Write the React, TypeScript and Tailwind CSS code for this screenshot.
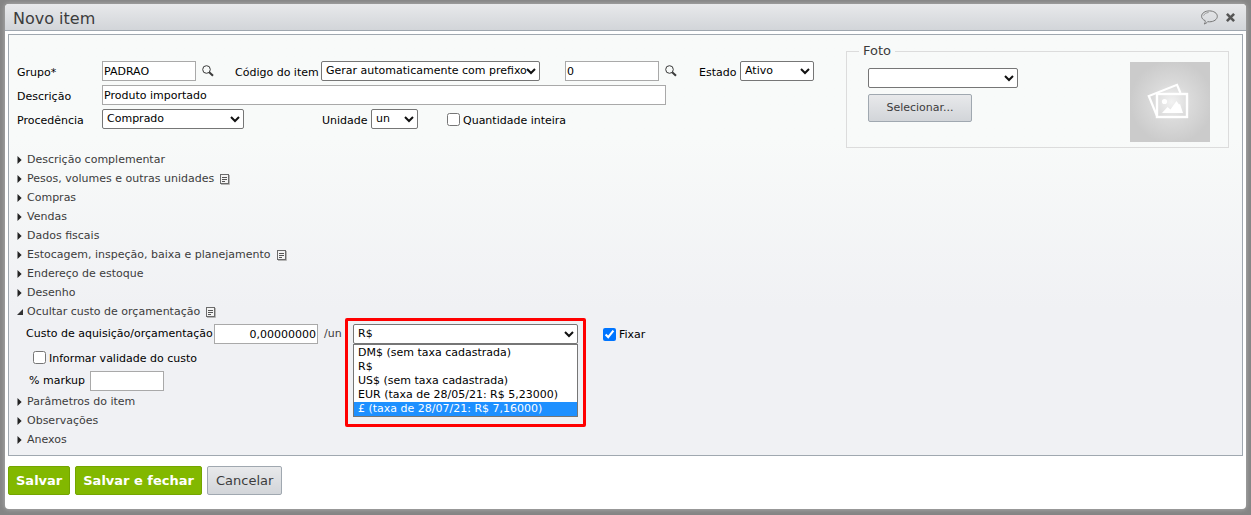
import React, { useState } from "react";
import type { ReactNode, SelectHTMLAttributes } from "react";

const inputClass =
  "h-5 rounded-none border border-[#a9a9a9] bg-white px-px text-[11px] leading-4 text-black focus:outline-none";
const checkboxClass = "m-0 size-[13px] shrink-0";
const grayButtonClass =
  "rounded-xs border border-[#a0a8b0] bg-linear-to-b from-[#e8e9eb] to-[#d2d5d9] text-[#3c3c3c]";
const greenButtonClass =
  "h-[29px] rounded-xs border border-[#74a500] bg-[#82b800] px-[7px] text-[13px] font-bold text-white";

const currencies = [
  "DM$ (sem taxa cadastrada)",
  "R$",
  "US$ (sem taxa cadastrada)",
  "EUR (taxa de 28/05/21: R$ 5,23000)",
  "£ (taxa de 28/07/21: R$ 7,16000)",
];

interface SelectProps extends SelectHTMLAttributes<HTMLSelectElement> {
  width: string; // classe de largura
  children: ReactNode;
}

function Select({ width, children, ...rest }: SelectProps) {
  return (
    <span className={`relative block shrink-0 ${width}`}>
      <select
        {...rest}
        className="block h-5 w-full appearance-none rounded-xs border border-[#767676] bg-white pl-1 text-[11px] leading-4 text-black focus:outline-none"
      >
        {children}
      </select>
      <svg
        width="10"
        height="7"
        viewBox="0 0 10 7"
        fill="none"
        stroke="#111"
        strokeWidth="2"
        className="pointer-events-none absolute top-[7px] right-1"
      >
        <path d="M1 1 L5 5 L9 1" />
      </svg>
    </span>
  );
}

function SearchButton({ label }: { label: string }) {
  return (
    <button type="button" aria-label={label} className="ml-1.5 shrink-0">
      <svg width="12" height="12" viewBox="0 0 12 12" fill="none" stroke="#3a3a3a">
        <circle cx="4.5" cy="4.5" r="3.8" />
        <path d="M7.2 7.2 L11 10.8" strokeWidth="2" />
      </svg>
    </button>
  );
}

function NoteIcon() {
  return (
    <svg width="10" height="11" viewBox="0 0 10 11" fill="none" className="mt-0.5 ml-1.5">
      <rect x="0.5" y="0.5" width="8" height="9" fill="#f4f4f4" stroke="#6b6b6b" />
      <path d="M2 3.5 H7 M2 5.5 H7 M2 7.5 H5" stroke="#555" />
      <path d="M9.5 1 V10.5 H1" stroke="#b5b5b5" />
    </svg>
  );
}

interface SectionProps {
  title: string;
  note?: boolean;
  open?: boolean;
}

function Section({ title, note, open }: SectionProps) {
  return (
    <button
      type="button"
      aria-expanded={!!open}
      className="flex h-[19px] items-center text-[11px] leading-4 text-[#3c3c3c]"
    >
      <span className="flex w-[10px] items-center">
        {open ? (
          <svg width="6" height="6" viewBox="0 0 6 6" fill="#333">
            <path d="M6 0 V6 H0 Z" />
          </svg>
        ) : (
          <svg width="5" height="8" viewBox="0 0 5 8" fill="#222">
            <path d="M0.5 0 L4.6 4 L0.5 8 Z" />
          </svg>
        )}
      </span>
      {title}
      {note && <NoteIcon />}
    </button>
  );
}

// pré-visualização vazia da foto
function PhotoPlaceholder() {
  return (
    <svg width="80" height="80" viewBox="0 0 80 80" role="img" aria-label="Sem foto" className="mt-[3px]">
      <defs>
        <radialGradient id="glow" cx="52%" cy="50%" r="52%">
          <stop offset="0" stopColor="#f2f2f2" />
          <stop offset="0.45" stopColor="#dadada" />
          <stop offset="1" stopColor="#cbcbcb" />
        </radialGradient>
      </defs>
      <rect width="80" height="80" fill="url(#glow)" />
      <path
        d="M50.5 31 L47 22.8 L18.8 34 L27 54"
        fill="none"
        stroke="#fff"
        strokeWidth="2.2"
      />
      <rect x="27" y="32" width="30" height="23" fill="none" stroke="#fff" strokeWidth="2.4" />
      <circle cx="34.5" cy="39.5" r="2.6" fill="#fff" />
      <path d="M32 51 L37.5 45 L40.5 47.5 L46.5 39 L49 42.5 L50 42 L53 51 Z" fill="#fff" />
    </svg>
  );
}

export default function App() {
  const [group, setGroup] = useState("PADRAO");
  const [prefix, setPrefix] = useState("0");
  const [description, setDescription] = useState("Produto importado");
  const [cost, setCost] = useState("0,00000000");
  const [markup, setMarkup] = useState("");
  const [currency, setCurrency] = useState("R$");

  return (
    <div className="min-h-screen bg-[#858585] px-[5px] pt-1 pb-1.5 font-['DejaVu_Sans',Verdana,sans-serif] text-[11px] leading-4 text-black">
      <div className="rounded-[4px] bg-white pb-[14px] shadow-[0_0_5px_#b4b4b4]">
        {/* barra de título */}
        <header className="flex h-[27px] items-center justify-between rounded-t-[4px] border-b border-[#a0a8b0] bg-linear-to-b from-[#e8e9eb] to-[#d2d5d9] pr-[11px] pl-2">
          <h1 className="pt-1 text-base text-[#3c3c3c]">Novo item</h1>
          <div className="flex items-center gap-2">
            <button type="button" aria-label="Comentários">
              <svg width="17" height="15" viewBox="0 0 17 15" fill="none" stroke="#777">
                <path d="M4.2 10.7 C1.9 9.7 0.6 8.2 0.6 6.3 C0.6 3.2 4 0.9 8.4 0.9 C12.8 0.9 16.3 3.2 16.3 6.3 C16.3 9.5 12.8 11.8 8.4 11.8 L6.6 11.7 C5.9 12.8 4.8 13.6 3.1 14 C4 13 4.4 12 4.2 10.7 Z" />
                <path d="M2.6 5.6 C3.3 3.9 5 2.8 7.6 2.5" stroke="#999" />
              </svg>
            </button>
            <button type="button" aria-label="Fechar">
              <svg width="9" height="9" viewBox="0 0 9 9" stroke="#555" strokeWidth="2.6">
                <path d="M0.9 0.9 L8.1 8.1 M8.1 0.9 L0.9 8.1" />
              </svg>
            </button>
          </div>
        </header>

        <main className="mx-[3px] mt-[3px] border border-[#a0a8b0] bg-linear-to-b from-[#f8faf9] from-25% to-[#f0f1f4] to-65% pr-[13px] pb-1.5 pl-2">
          <div className="flex justify-between pt-2">
            <div className="grid grid-cols-[85px_1fr] auto-rows-[20px] content-start items-center gap-y-1 pt-[18px]">
              <label htmlFor="group" className="pt-1">Grupo*</label>
              <div className="flex items-center">
                <input
                  id="group"
                  className={`${inputClass} w-[94px]`}
                  value={group}
                  onChange={(e) => setGroup(e.target.value)}
                />
                <SearchButton label="Pesquisar grupo" />
                <label htmlFor="code" className="ml-[21px] w-[86px] pt-1 whitespace-nowrap">Código do item</label>
                <Select id="code" width="w-[219px]">
                  <option>Gerar automaticamente com prefixo</option>
                </Select>
                <input
                  aria-label="Prefixo"
                  className={`${inputClass} ml-[25px] w-[94px]`}
                  value={prefix}
                  onChange={(e) => setPrefix(e.target.value)}
                />
                <SearchButton label="Pesquisar prefixo" />
                <label htmlFor="state" className="ml-[22px] w-[41px] pt-1">Estado</label>
                <Select id="state" width="w-[74px]">
                  <option>Ativo</option>
                </Select>
              </div>

              <label htmlFor="description" className="pt-1">Descrição</label>
              <input
                id="description"
                className={`${inputClass} w-[564px]`}
                value={description}
                onChange={(e) => setDescription(e.target.value)}
              />

              <label htmlFor="origin" className="pt-1">Procedência</label>
              <div className="flex items-center">
                <Select id="origin" width="w-[142px]">
                  <option>Comprado</option>
                </Select>
                <label htmlFor="unit" className="ml-[78px] w-[49px] pt-1">Unidade</label>
                <Select id="unit" width="w-[47px]">
                  <option>un</option>
                </Select>
                <label className="ml-[29px] flex items-center gap-[3px]">
                  <input type="checkbox" className={checkboxClass} />
                  <span className="pt-1">Quantidade inteira</span>
                </label>
              </div>
            </div>

            <fieldset className="flex h-[105px] w-[383px] justify-between border border-[#dcdcdc] pr-[18px] pl-[21px]">
              <legend className="-ml-[9px] px-1 text-[13px] leading-4 text-[#3c3c3c]">Foto</legend>
              <div className="flex flex-col items-start gap-[6px] pt-[9px]">
                <Select aria-label="Foto" width="w-[150px]">
                  <option></option>
                </Select>
                <button type="button" className={`${grayButtonClass} h-7 w-[104px]`}>
                  Selecionar...
                </button>
              </div>
              <PhotoPlaceholder />
            </fieldset>
          </div>

          {/* seções recolhíveis */}
          <div className="flex flex-col items-start pt-0.5">
            <Section title="Descrição complementar" />
            <Section title="Pesos, volumes e outras unidades" note />
            <Section title="Compras" />
            <Section title="Vendas" />
            <Section title="Dados fiscais" />
            <Section title="Estocagem, inspeção, baixa e planejamento" note />
            <Section title="Endereço de estoque" />
            <Section title="Desenho" />
            <Section title="Ocultar custo de orçamentação" note open />

            <div className="pt-[3px] pb-px pl-[9px]">
              <div className="flex items-center">
                <label htmlFor="cost" className="w-[188px] whitespace-nowrap">Custo de aquisição/orçamentação</label>
                <input
                  id="cost"
                  className={`${inputClass} w-[104px] text-right`}
                  value={cost}
                  onChange={(e) => setCost(e.target.value)}
                />
                <span className="ml-1.5 w-[29px] text-[#3c3c3c]">/un</span>
                <div className="relative">
                  <Select
                    aria-label="Moeda"
                    width="w-[225px]"
                    value={currency}
                    onChange={(e) => setCurrency(e.target.value)}
                  >
                    {currencies.map((name) => (
                      <option key={name}>{name}</option>
                    ))}
                  </Select>
                  {/* lista aberta com as moedas cadastradas */}
                  <ul className="absolute top-full left-0 z-10 w-full border border-[#767676] bg-white pt-px">
                    {currencies.map((name, i) => (
                      <li
                        key={name}
                        onClick={() => setCurrency(name)}
                        className={`h-[14px] pl-1 text-[11px] leading-[14px] whitespace-nowrap ${
                          i === 4 ? "bg-[#1e90ff] text-white" : "text-black"
                        }`}
                      >
                        {name}
                      </li>
                    ))}
                  </ul>
                  <div className="pointer-events-none absolute -top-1.5 -right-2 -left-2 z-20 h-[109px] rounded-xs border-3 border-[#ff0000]" />
                </div>
                <label className="ml-[25px] flex items-center gap-[3px]">
                  <input type="checkbox" defaultChecked className={checkboxClass} />
                  <span className="pt-0.5">Fixar</span>
                </label>
              </div>
              <label className="ml-[7px] flex h-[27px] w-fit items-center gap-[3px]">
                <input type="checkbox" className={checkboxClass} />
                <span className="pt-0.5">Informar validade do custo</span>
              </label>
              <div className="flex items-center pl-[3px]">
                <label htmlFor="markup" className="w-[61px]">% markup</label>
                <input
                  id="markup"
                  className={`${inputClass} w-[74px]`}
                  value={markup}
                  onChange={(e) => setMarkup(e.target.value)}
                />
              </div>
            </div>

            <Section title="Parâmetros do item" />
            <Section title="Observações" />
            <Section title="Anexos" />
          </div>
        </main>

        <footer className="flex gap-[5px] px-[3px] pt-2.5">
          <button type="button" className={greenButtonClass}>Salvar</button>
          <button type="button" className={greenButtonClass}>Salvar e fechar</button>
          <button type="button" className={`${grayButtonClass} h-[29px] px-2 text-[13px]`}>
            Cancelar
          </button>
        </footer>
      </div>
    </div>
  );
}
